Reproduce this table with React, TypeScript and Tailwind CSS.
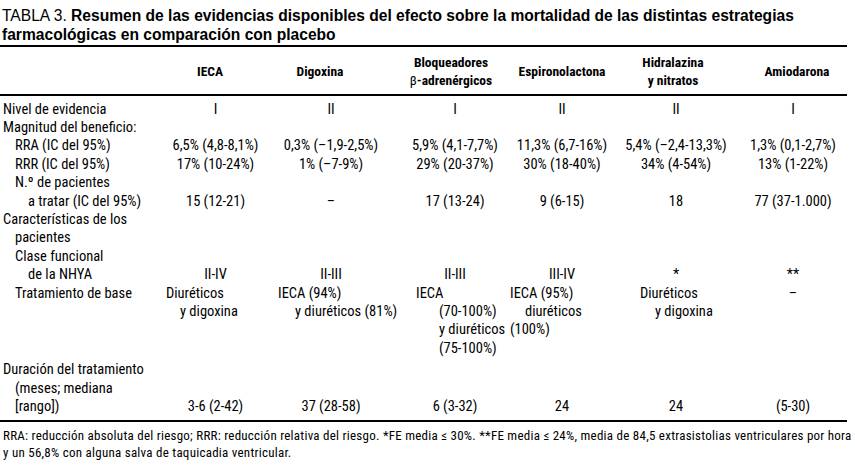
const narrow = "font-['Roboto_Condensed','Liberation_Sans_Narrow',sans-serif]";

type Line = { text: string; indent?: number };

const cols = "grid grid-cols-[163px_105px_126px_122px_92px_136px_98px]";

function Label({ lines }: { lines: Line[] }) {
  return (
    <div className="flex flex-col">
      {lines.map((line, i) => (
        <div key={i} className="whitespace-nowrap" style={{ paddingLeft: line.indent ?? 0 }}>
          {line.text}
        </div>
      ))}
    </div>
  );
}

function Center({ value }: { value: string }) {
  return <div className="flex justify-center self-end whitespace-nowrap">{value}</div>;
}

function Row({ label, values, className }: { label: Line[]; values: string[]; className?: string }) {
  return (
    <div className={`${cols} ${className ?? ""}`}>
      <Label lines={label} />
      {values.map((value, i) => (
        <Center key={i} value={value} />
      ))}
    </div>
  );
}

export default function App() {
  return (
    <div className="h-[466px] w-[855px] overflow-hidden bg-white text-black">
      <h1 className="px-[2px] pt-[6px] font-['Liberation_Sans',Arial,sans-serif] text-[15.6px] leading-[19px]">
        TABLA 3. <b>Resumen de las evidencias disponibles del efecto sobre la mortalidad de las distintas estrategias farmacológicas en comparación con placebo</b>
      </h1>

      <div className={`w-[847px] ${narrow}`}>
        <div className="mt-[1px] h-[2px] bg-black" />

        <div className={`${cols} h-[47px] items-center text-[13.5px] font-bold leading-[18px]`}>
          <div />
          <div className="flex justify-center pr-[11px]">IECA</div>
          <div className="flex justify-center pr-[22px]">Digoxina</div>
          <div className="flex flex-col items-center pr-[8px]">
            <span>Bloqueadores</span>
            <span>
              <span className="font-normal">β</span>-adrenérgicos
            </span>
          </div>
          <div className="flex justify-center">Espironolactona</div>
          <div className="flex flex-col items-center pr-[6px]">
            <span>Hidralazina</span>
            <span>y nitratos</span>
          </div>
          <div className="flex justify-center pl-[8px]">Amiodarona</div>
        </div>

        <div className="h-[1.5px] bg-black" />

        <div className="pb-[4px] pt-[5px] text-[14.5px] leading-[18.4px]">
          <Row label={[{ text: "Nivel de evidencia", indent: 3 }]} values={["I", "II", "I", "II", "II", "I"]} />
          <Label lines={[{ text: "Magnitud del beneficio:", indent: 3 }]} />
          <Row
            label={[{ text: "RRA (IC del 95%)", indent: 15 }]}
            values={["6,5% (4,8-8,1%)", "0,3% (–1,9-2,5%)", "5,9% (4,1-7,7%)", "11,3% (6,7-16%)", "5,4% (–2,4-13,3%)", "1,3% (0,1-2,7%)"]}
          />
          <Row
            label={[{ text: "RRR (IC del 95%)", indent: 15 }]}
            values={["17% (10-24%)", "1% (–7-9%)", "29% (20-37%)", "30% (18-40%)", "34% (4-54%)", "13% (1-22%)"]}
          />
          <Row
            label={[
              { text: "N.º de pacientes", indent: 15 },
              { text: "a tratar (IC del 95%)", indent: 28 },
            ]}
            values={["15 (12-21)", "–", "17 (13-24)", "9 (6-15)", "18", "77 (37-1.000)"]}
          />
          <Label
            lines={[
              { text: "Características de los", indent: 3 },
              { text: "pacientes", indent: 15 },
            ]}
          />
          <Row
            label={[
              { text: "Clase funcional", indent: 15 },
              { text: "de la NHYA", indent: 28 },
            ]}
            values={["II-IV", "II-III", "II-III", "III-IV", "*", "**"]}
          />
          <div className={cols}>
            <Label lines={[{ text: "Tratamiento de base", indent: 15 }]} />
            <Label lines={[{ text: "Diuréticos", indent: 3 }, { text: "y digoxina", indent: 17 }]} />
            <Label lines={[{ text: "IECA (94%)", indent: 10 }, { text: "y diuréticos (81%)", indent: 27 }]} />
            <Label
              lines={[
                { text: "IECA", indent: 22 },
                { text: "(70-100%)", indent: 45 },
                { text: "y diuréticos", indent: 45 },
                { text: "(75-100%)", indent: 45 },
              ]}
            />
            <div className="-ml-[6px]">
              <Label lines={[{ text: "IECA (95%)" }, { text: "diuréticos", indent: 15 }, { text: "(100%)" }]} />
            </div>
            <Label lines={[{ text: "Diuréticos", indent: 32 }, { text: "y digoxina", indent: 47 }]} />
            <div className="flex justify-center whitespace-nowrap">–</div>
          </div>
          <Row
            className="mt-[3px]"
            label={[
              { text: "Duración del tratamiento", indent: 3 },
              { text: "(meses; mediana", indent: 15 },
              { text: "[rango])", indent: 15 },
            ]}
            values={["3-6 (2-42)", "37 (28-58)", "6 (3-32)", "24", "24", "(5-30)"]}
          />
        </div>

        <div className="h-[1.5px] bg-black" />

        <p className="whitespace-nowrap px-[3px] pt-[5px] text-[13px] leading-[17px] tracking-[0.25px]">
          RRA: reducción absoluta del riesgo; RRR: reducción relativa del riesgo. *FE media ≤ 30%. **FE media ≤ 24%, media de 84,5 extrasistolias ventriculares por hora
          <br />
          y un 56,8% con alguna salva de taquicadia ventricular.
        </p>
      </div>
    </div>
  );
}
